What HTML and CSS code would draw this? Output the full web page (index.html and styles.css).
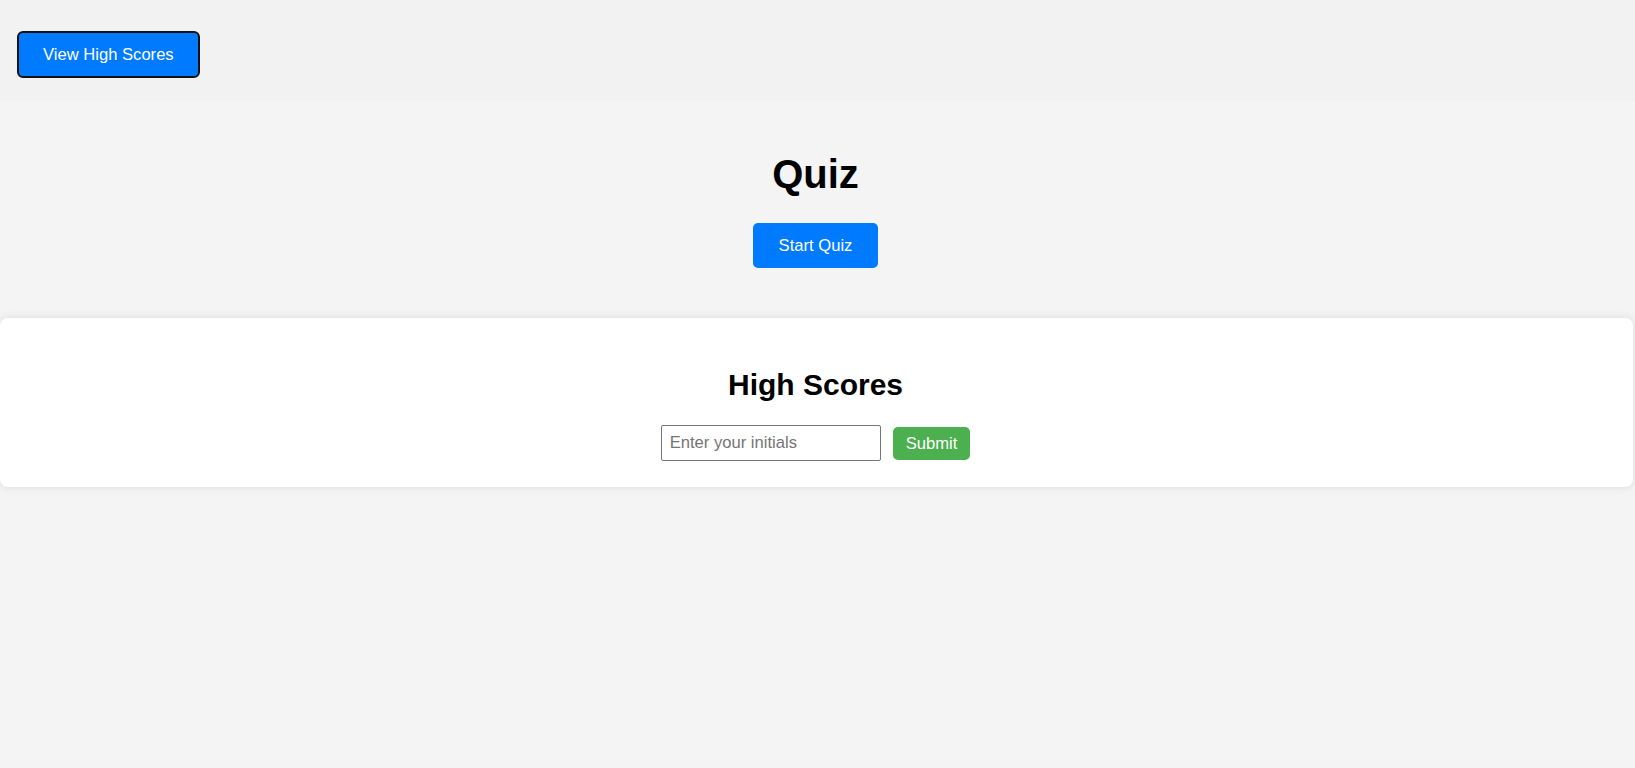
FILE: index.html
```html
<!DOCTYPE html>
<html lang="en">
<head>
<meta charset="utf-8">
<title>Quiz</title>
<link rel="stylesheet" href="styles.css">
</head>
<body>
<header class="topbar">
  <button class="btn btn-outline">View High Scores</button>
</header>
<main class="main">
  <section class="intro">
    <h1 class="title">Quiz</h1>
    <button class="btn btn-start">Start Quiz</button>
  </section>
  <section class="card">
    <h2 class="card-title">High Scores</h2>
    <form class="score-form">
      <input class="initials" type="text" placeholder="Enter your initials">
      <button class="btn btn-submit" type="button">Submit</button>
    </form>
  </section>
</main>
</body>
</html>
```

FILE: styles.css
```css
* {
  box-sizing: border-box;
}

html, body {
  margin: 0;
  padding: 0;
}

body {
  background: #f4f4f4;
  font-family: "Liberation Sans", Arial, sans-serif;
  color: #000;
  min-height: 768px;
}

.topbar {
  background: #f2f2f2;
  padding: 31px 17px 24px;
  display: flex;
}

.btn {
  font-family: "Liberation Sans", Arial, sans-serif;
  font-size: 16.6px;
  line-height: 19px;
  color: #fff;
  border: none;
  cursor: pointer;
}

.btn-outline {
  background: #007bff;
  border: 2px solid #111;
  border-radius: 6px;
  padding: 12px 24px;
}

.main {
  display: flex;
  flex-direction: column;
}

.intro {
  display: flex;
  flex-direction: column;
  align-items: center;
  padding: 50px 4px 50px 0;
}

.title {
  margin: 0 0 26px;
  font-size: 40px;
  line-height: 45px;
  font-weight: bold;
}

.btn-start {
  background: #007bff;
  border-radius: 5px;
  padding: 13px 25.5px;
}

.card {
  background: #fff;
  border-radius: 8px;
  box-shadow: 0 0 10px rgba(0, 0, 0, 0.1);
  margin-right: 2px;
  padding: 50px 21px 26px 19px;
  display: flex;
  flex-direction: column;
  align-items: center;
}

.card-title {
  margin: 0 0 24px;
  font-size: 30px;
  line-height: 33px;
  font-weight: bold;
}

.score-form {
  display: flex;
  align-items: center;
  gap: 12px;
}

.initials {
  width: 220px;
  height: 36px;
  border: 1px solid #767676;
  border-radius: 2px;
  padding: 0 8px;
  font-family: "Liberation Sans", Arial, sans-serif;
  font-size: 16.6px;
  color: #000;
  background: #fff;
}

.initials::placeholder {
  color: #757575;
}

.btn-submit {
  background: #4caf50;
  border-radius: 5px;
  padding: 7px 13px;
}
```
